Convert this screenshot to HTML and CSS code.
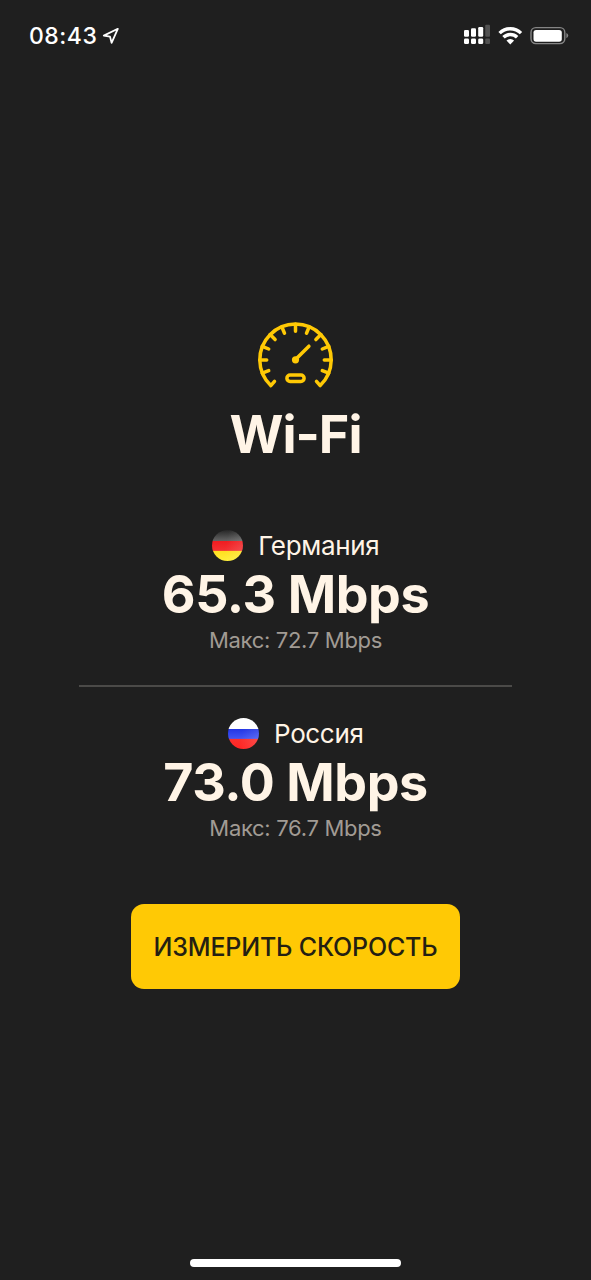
FILE: index.html
```html
<!DOCTYPE html>
<html lang="ru">
<head>
<meta charset="utf-8">
<title>Wi-Fi</title>
<link rel="stylesheet" href="styles.css">
</head>
<body>
<div class="screen">
  <header class="status">
    <span class="time">08:43</span>
    <svg class="location" width="18" height="18" viewBox="0 0 18 18"><path d="M15.8 1.8 1.8 8.6l6.2 1 1.6 6.2z"/></svg>
    <svg class="indicators" width="110" height="24" viewBox="0 0 110 24">
      <g fill="#fff">
        <rect x="4" y="10" width="5" height="6.8" rx="1.2"/>
        <rect x="11" y="8.2" width="5" height="8.6" rx="1.2"/>
        <rect x="18.2" y="7" width="5" height="9.8" rx="1.2"/>
        <rect x="4" y="18.4" width="5" height="5.7" rx="1.4"/>
        <rect x="11" y="18.4" width="5" height="5.7" rx="1.4"/>
        <rect x="18.2" y="18.4" width="5" height="5.7" rx="1.4"/>
      </g>
      <g fill="#515151">
        <rect x="25.2" y="4.8" width="4.8" height="11.9" rx="1"/>
        <rect x="25.2" y="18.5" width="4.8" height="5.5" rx="1"/>
      </g>
      <g fill="none" stroke="#fff" stroke-width="3.4">
        <path d="M39.6 13.1a15.2 15.2 0 0 1 21.4 0"/>
        <path d="M43.5 17.3a9.6 9.6 0 0 1 13.6 0"/>
      </g>
      <path d="M50.3 24.5l-3.8-3.9a5.5 5.5 0 0 1 7.6 0z" fill="#fff"/>
      <rect x="71" y="7.6" width="33.8" height="16" rx="4.8" fill="none" stroke="#858585" stroke-width="1.4"/>
      <rect x="73.5" y="10" width="28.3" height="11.7" rx="2.6" fill="#fff"/>
      <path d="M106.4 13v5.2q1.8-.7 1.8-2.6t-1.8-2.6z" fill="#858585"/>
    </svg>
  </header>
  <main class="content">
    <svg class="gauge" width="75" height="68" viewBox="-37.5 -38 75 68">
      <path d="M-21 21.4-24.7 25.6A35.7 35.7 0 1 1 24.7 25.6L21 21.4"/>
      <path d="M-33.3 13.2-26.8 10.6M-35.7 0H-28.8M-33.2-13.7-26.8-11M-25.4-25.4-20.4-20.4M-13.7-33.2-11-26.8M0-35.7V-28.8M13.7-33.2 11-26.8M25.4-25.4 20.4-20.4M33.2-13.7 26.8-11M35.7 0H28.8M33.3 13.2 26.8 10.6"/>
      <path d="M0-.4 13.4-13.8"/>
      <circle class="hub" cy="-.2" r="3.6"/>
      <rect x="-8.6" y="15" width="17.2" height="6.4" rx="3.2"/>
    </svg>
    <h1 class="title">Wi-Fi</h1>
    <section class="result">
      <div class="country"><span class="flag germany"></span><span class="name">Германия</span></div>
      <div class="speed">65.3 Mbps</div>
      <div class="max">Макс: 72.7 Mbps</div>
    </section>
    <hr class="divider">
    <section class="result">
      <div class="country"><span class="flag russia"></span><span class="name">Россия</span></div>
      <div class="speed">73.0 Mbps</div>
      <div class="max">Макс: 76.7 Mbps</div>
    </section>
    <button class="measure">ИЗМЕРИТЬ СКОРОСТЬ</button>
  </main>
  <div class="home"></div>
</div>
</body>
</html>
```
FILE: styles.css
```css
* { box-sizing: border-box; }
body {
  margin: 0;
  background: #1f1f1f;
  color: #fff4e6;
  font-family: Inter, "Liberation Sans", sans-serif;
}
.screen {
  width: 591px;
  height: 1280px;
  display: flex;
  flex-direction: column;
  align-items: center;
  overflow: hidden;
}
.status {
  width: 100%;
  height: 70px;
  padding: 20px 21px 0 29px;
  display: flex;
  align-items: flex-start;
  color: #fff;
}
.time {
  font-size: 23px;
  line-height: 32px;
  font-weight: 500;
  letter-spacing: .5px;
  white-space: nowrap;
  width: 73px;
}
.location {
  margin-top: 7px;
  fill: none;
  stroke: #fff;
  stroke-width: 1.8;
  stroke-linejoin: round;
}
.indicators { margin-left: auto; overflow: visible; }
.content {
  flex: 1;
  width: 433px;
  padding-top: 252px;
  display: flex;
  flex-direction: column;
  align-items: center;
}
.gauge {
  overflow: visible;
  fill: none;
  stroke: #ffc905;
  stroke-width: 3.5;
  stroke-linecap: round;
  stroke-linejoin: round;
}
.hub { fill: #ffc905; stroke: none; }
.title {
  margin: 15px 0 65px;
  font-size: 52px;
  line-height: 60px;
  font-weight: 700;
  letter-spacing: -1px;
}
.result {
  height: 124px;
  display: flex;
  flex-direction: column;
  align-items: center;
  white-space: nowrap;
}
.country {
  height: 32px;
  display: flex;
  align-items: flex-start;
  gap: 15.5px;
  font-size: 26px;
  line-height: 32px;
  letter-spacing: -.35px;
}
.flag { width: 31px; height: 31px; border-radius: 50%; }
.germany {
  background:
    linear-gradient(100deg, transparent 45%, rgba(255, 255, 255, .15)),
    linear-gradient(#262626, #626262 34%, #f01c20 35%, #f33032 66%, #ffdf20 67%, #ffef38);
}
.russia {
  background:
    linear-gradient(100deg, transparent 45%, rgba(255, 255, 255, .15)),
    linear-gradient(#fff 34%, #2335e4 35%, #4054f4 66%, #fb302d 67%, #ff2423);
}
.speed {
  margin-top: 3px;
  font-size: 52px;
  line-height: 60px;
  font-weight: 700;
  letter-spacing: -.4px;
}
.max {
  margin-top: 1px;
  font-size: 22px;
  line-height: 28px;
  letter-spacing: -.3px;
  color: #a19b94;
}
.divider {
  width: 433px;
  height: 2px;
  margin: 31px 0;
  border: 0;
  background: #4b4a48;
}
.measure {
  width: 329px;
  height: 85px;
  margin-top: 62px;
  padding: 0;
  border: 0;
  border-radius: 13px;
  background: #ffc905;
  color: #241f12;
  font: 500 25px/32px Inter, "Liberation Sans", sans-serif;
  letter-spacing: -.17px;
  white-space: nowrap;
}
.home {
  width: 211px;
  height: 8px;
  margin-bottom: 13px;
  border-radius: 4px;
  background: #fff;
}
```
